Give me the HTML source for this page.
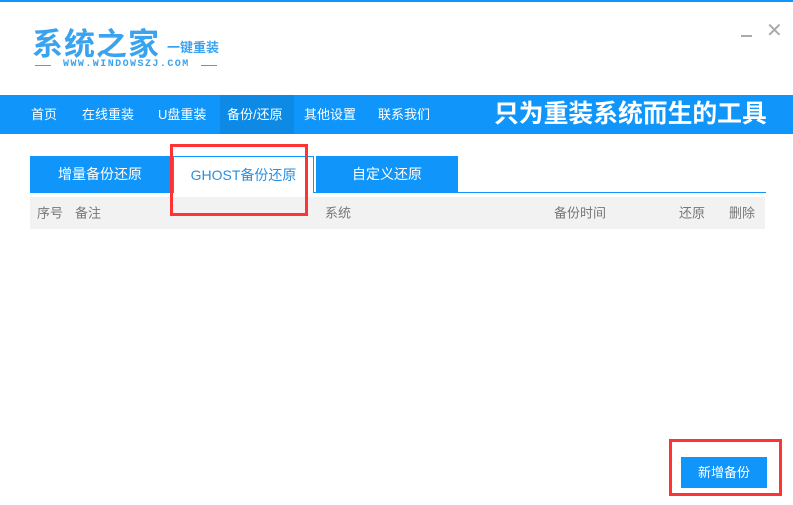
<!DOCTYPE html><html><head><meta charset="utf-8"><style>
body{margin:0;width:793px;height:505px;overflow:hidden;background:#fff;font-family:"Liberation Sans","Noto Sans CJK SC",sans-serif;position:relative}
.a{position:absolute}
.nav{left:0;top:95px;width:793px;height:39px;background:#1096fb}
.ni{top:0;height:39px;line-height:39px;color:#fff;font-size:13px}
.tab{top:156px;height:36px;line-height:36px;text-align:center;font-size:14px;color:#fff;background:#1096fb}
.th{top:213px;font-size:13px;color:#777;line-height:1;transform:translateY(-50%)}
</style></head><body>
<div class="a" style="left:0;top:0;width:793px;height:2px;background:#1096fb"></div>
<div class="a" style="left:32px;top:19px;font-size:31px;color:#3aa3f0;font-weight:bold;letter-spacing:1px">系统之家</div>
<div class="a" style="left:167px;top:37px;font-size:13px;color:#3aa3f0;font-weight:bold">一键重装</div>
<div class="a" style="left:35px;top:65px;width:16px;height:1px;background:#3aa3f0"></div>
<div class="a" style="left:63px;top:59px;font-size:10px;color:#3aa3f0;font-family:'Liberation Mono',monospace;font-weight:bold;letter-spacing:1.45px">WWW.WINDOWSZJ.COM</div>
<div class="a" style="left:201px;top:65px;width:16px;height:1px;background:#3aa3f0"></div>
<div class="a" style="left:741px;top:35px;width:11px;height:2px;background:#aaa"></div>
<div class="a" style="left:766px;top:19px;font-size:20px;color:#aaa;line-height:24px">✕</div>
<div class="a nav">
<div class="a" style="left:220px;top:0;width:74px;height:39px;background:#0c8ae6"></div>
<div class="a ni" style="left:31px">首页</div>
<div class="a ni" style="left:82px">在线重装</div>
<div class="a ni" style="left:158px">U盘重装</div>
<div class="a ni" style="left:227px">备份/还原</div>
<div class="a ni" style="left:304px">其他设置</div>
<div class="a ni" style="left:378px">联系我们</div>
<div class="a" style="left:494px;top:0;line-height:39px;color:#fff;font-size:24.8px;font-weight:bold">只为重装系统而生的工具</div>
</div>
<div class="a tab" style="left:30px;width:140px">增量备份还原</div>
<div class="a tab" style="left:173px;width:139px;background:#fff;color:#2a8fe0;border:1px solid #1096fb;border-bottom:none;height:36px">GHOST备份还原</div>
<div class="a tab" style="left:316px;width:142px">自定义还原</div>
<div class="a" style="left:30px;top:192px;width:736px;height:1px;background:#1096fb"></div>
<div class="a" style="left:174px;top:192px;width:139px;height:1px;background:#fff"></div>
<div class="a" style="left:30px;top:197px;width:735px;height:32px;background:#f2f2f2"></div>
<div class="a th" style="left:37px">序号</div>
<div class="a th" style="left:75px">备注</div>
<div class="a th" style="left:325px">系统</div>
<div class="a th" style="left:554px">备份时间</div>
<div class="a th" style="left:679px">还原</div>
<div class="a th" style="left:729px">删除</div>
<div class="a" style="left:170px;top:144px;width:132px;height:66px;border:3px solid #f33"></div>
<div class="a" style="left:681px;top:457px;width:86px;height:31px;background:#1096fb;color:#fff;font-size:13px;line-height:31px;text-align:center">新增备份</div>
<div class="a" style="left:669px;top:439px;width:107px;height:51px;border:3px solid #f33"></div>
</body></html>
